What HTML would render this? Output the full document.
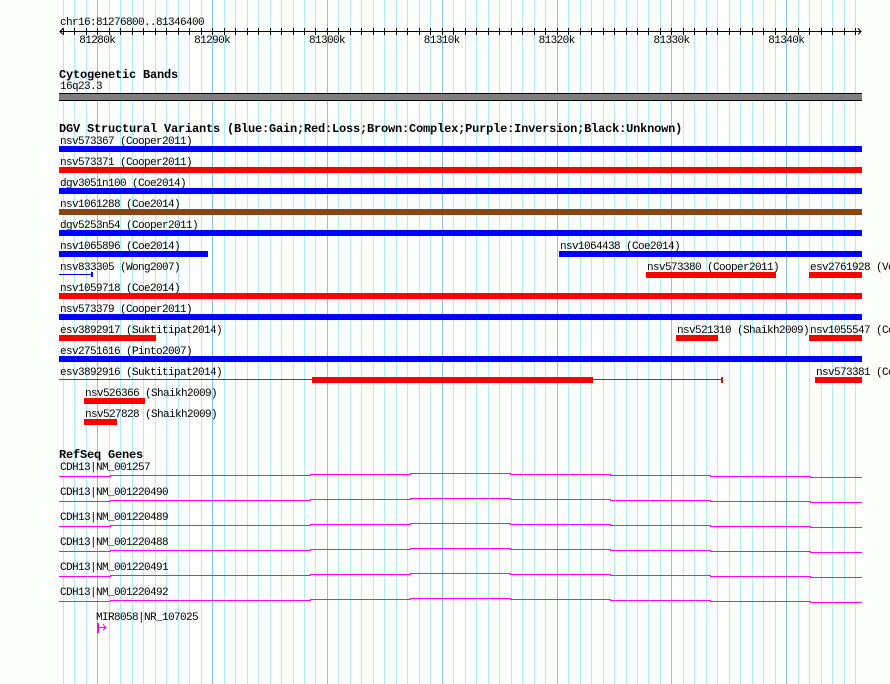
<!DOCTYPE html>
<html><head><meta charset="utf-8"><style>
html,body{margin:0;padding:0;background:#fcfefc;}
svg{display:block;}
text{font-family:"Liberation Mono","DejaVu Sans Mono",monospace;font-size:11px;letter-spacing:-0.6px;fill:#000;}
.b{font-weight:bold;font-size:12px;letter-spacing:-0.2px;}
</style></head><body>
<svg width="890" height="684" xmlns="http://www.w3.org/2000/svg" shape-rendering="crispEdges">
<rect width="890" height="684" fill="#fcfefc"/>
<g id="grid"></g>
<g id="ruler" stroke="#000" stroke-width="1"></g>
<text x="60" y="25">chr16:81276800..81346400</text>
<g id="rlabels"></g>
<text class="b" x="59" y="78">Cytogenetic Bands</text>
<text x="60" y="89">16q23.3</text>
<rect x="59" y="93" width="803" height="8" fill="#000"/>
<rect x="59" y="94" width="803" height="6" fill="#808080"/>
<text class="b" x="59" y="132">DGV Structural Variants (Blue:Gain;Red:Loss;Brown:Complex;Purple:Inversion;Black:Unknown)</text>
<g id="dgv"></g>
<text class="b" x="59" y="458">RefSeq Genes</text>
<g id="genes"></g>
<text x="96" y="620">MIR8058|NR_107025</text>
<rect x="97" y="623" width="2" height="10" fill="#ff00ff"/>
<path d="M99 627.5H106M103 624.5L106 627.5L103 630.5" stroke="#ff00ff" fill="none" stroke-width="1"/>
</svg>
<script>
var NS="http://www.w3.org/2000/svg";
function el(p,t,a,txt){var e=document.createElementNS(NS,t);for(var k in a)e.setAttribute(k,a[k]);if(txt)e.textContent=txt;document.getElementById(p).appendChild(e);return e;}
var step=114.83/10;
for(var k=-3;k<=66;k++){var x=Math.round(97.3+k*step)+0.5;var major=((k%10)+10)%10==0;
el("grid","line",{x1:x,x2:x,y1:0,y2:684,stroke:major?"#88c4ea":"#b0ecf0","stroke-width":1});}
el("ruler","line",{x1:60,x2:861,y1:31.5,y2:31.5});
el("ruler","path",{d:"M63 28.5L60 31.5L63 34.5M858 28.5L861 31.5L858 34.5",fill:"none"});
for(var k=-3;k<=66;k++){var x=Math.round(97.3+k*step)+0.5;el("ruler","line",{x1:x,x2:x,y1:28,y2:35});}
var labs=["81280k","81290k","81300k","81310k","81320k","81330k","81340k"];
for(var i=0;i<7;i++){el("rlabels","text",{x:97.3+i*114.83,y:43,"text-anchor":"middle"},labs[i]);}
var B="#0000ff",R="#ff0000",Br="#8b4513";
var rows=[
[[59,861,B,"nsv573367 (Cooper2011)"]],
[[59,861,R,"nsv573371 (Cooper2011)"]],
[[59,861,B,"dgv3051n100 (Coe2014)"]],
[[59,861,Br,"nsv1061288 (Coe2014)"]],
[[59,861,B,"dgv5253n54 (Cooper2011)"]],
[[59,207,B,"nsv1065896 (Coe2014)"],[559,861,B,"nsv1064438 (Coe2014)"]],
[[59,92,B,"nsv833305 (Wong2007)","thin"],[646,775,R,"nsv573380 (Cooper2011)"],[809,861,R,"esv2761928 (Vogler2010)"]],
[[59,861,R,"nsv1059718 (Coe2014)"]],
[[59,861,B,"nsv573379 (Cooper2011)"]],
[[59,155,R,"esv3892917 (Suktitipat2014)"],[676,717,R,"nsv521310 (Shaikh2009)"],[809,861,R,"nsv1055547 (Coe2014)"]],
[[59,861,B,"esv2751616 (Pinto2007)"]],
[[59,722,R,"esv3892916 (Suktitipat2014)","split"],[815,861,R,"nsv573381 (Cooper2011)"]],
[[84,144,R,"nsv526366 (Shaikh2009)"]],
[[84,116,R,"nsv527828 (Shaikh2009)"]]
];
for(var i=0;i<rows.length;i++){var y=146+21*i;
rows[i].forEach(function(f){
el("dgv","text",{x:f[0]+1,y:y-2},f[3]);
if(f[4]=="thin"){el("dgv","rect",{x:f[0],y:y+2,width:f[1]-f[0],height:1,fill:f[2]});el("dgv","rect",{x:f[1]-1,y:y,width:2,height:5,fill:f[2]});}
else if(f[4]=="split"){el("dgv","rect",{x:f[0],y:y+2,width:f[1]-f[0],height:1,fill:f[2]});el("dgv","rect",{x:f[1]-1,y:y,width:2,height:6,fill:f[2]});el("dgv","rect",{x:312,y:y,width:281,height:6,fill:f[2]});}
else el("dgv","rect",{x:f[0],y:y,width:f[1]-f[0]+1,height:6,fill:f[2]});
});}
var gl=["CDH13|NM_001257","CDH13|NM_001220490","CDH13|NM_001220489","CDH13|NM_001220488","CDH13|NM_001220491","CDH13|NM_001220492"];
var segs=[[59,110,2],[110,210,1],[210,310,1],[310,410,0],[410,510,-1],[510,610,0],[610,710,1],[710,810,2],[810,861,3]];
for(var i=0;i<6;i++){var by=474+25*i;
el("genes","text",{x:60,y:470+25*i},gl[i]);
segs.forEach(function(s){el("genes","rect",{x:s[0],y:by+s[2],width:s[1]-s[0]+1,height:1,fill:"#ff00ff"});});}
</script>
</body></html>
